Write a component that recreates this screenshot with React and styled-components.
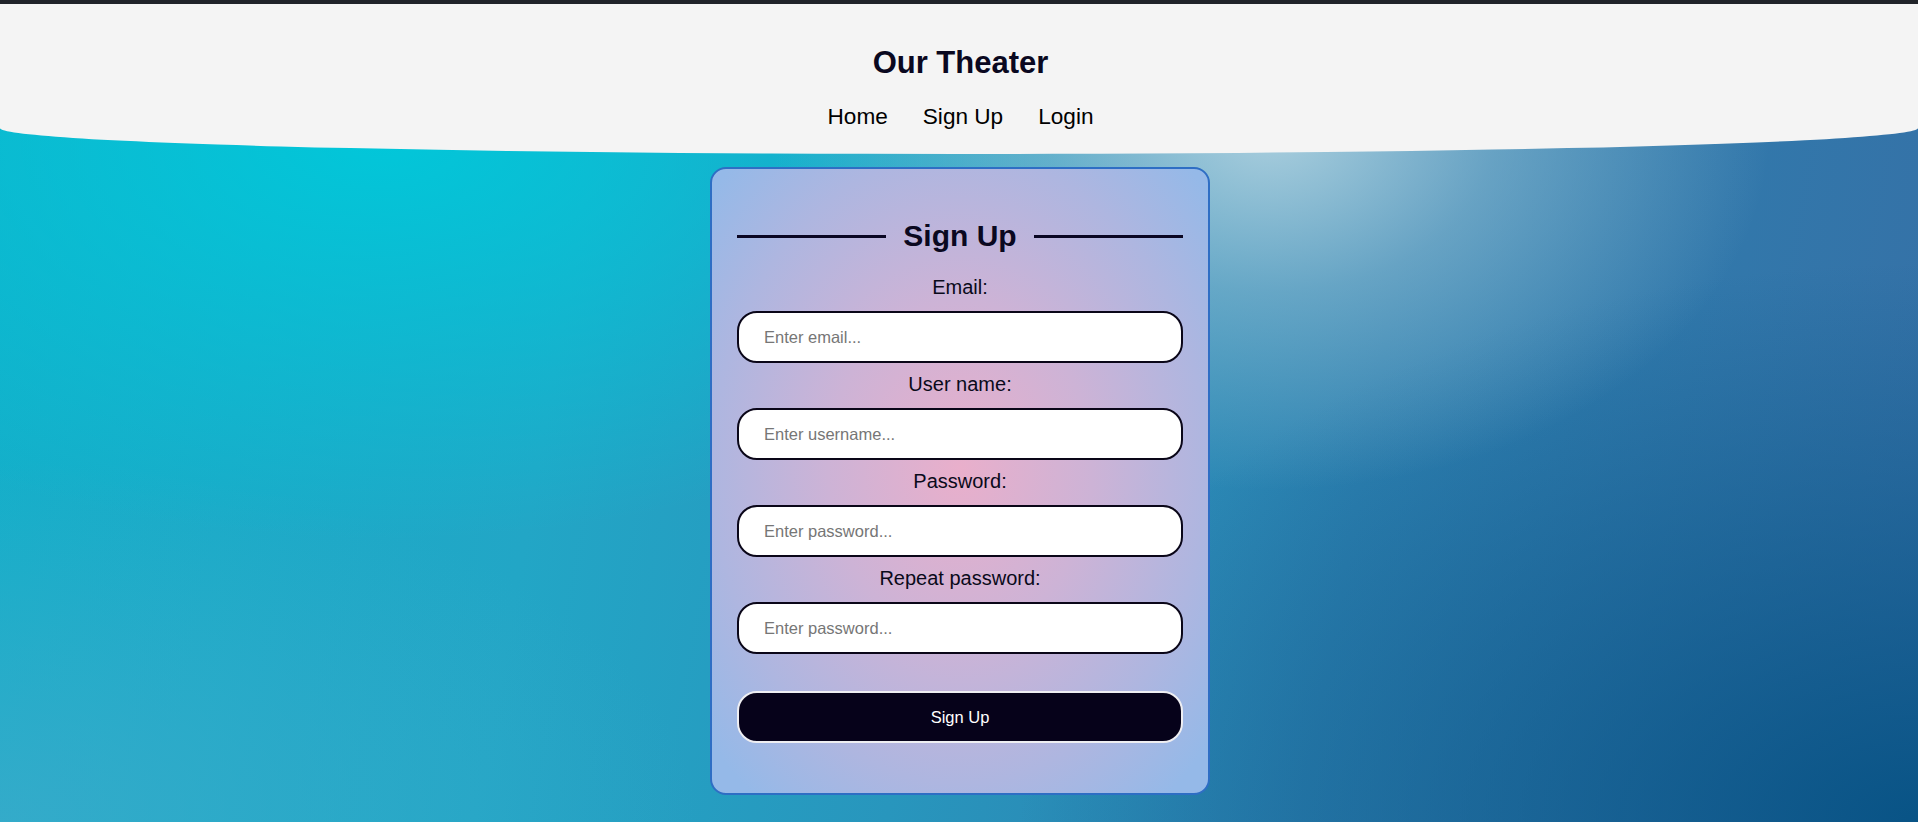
import React from "react";
import styled, { createGlobalStyle } from "styled-components";

const GlobalStyle = createGlobalStyle`
  * {
    box-sizing: border-box;
  }
  html, body {
    margin: 0;
    padding: 0;
  }
  body {
    font-family: "Liberation Sans", Arial, sans-serif;
    color: #0a0820;
  }
`;

const fields = [
  { label: "Email:", type: "email", placeholder: "Enter email..." },
  { label: "User name:", type: "text", placeholder: "Enter username..." },
  { label: "Password:", type: "password", placeholder: "Enter password..." },
  {
    label: "Repeat password:",
    type: "password",
    placeholder: "Enter password...",
  },
];

const App = () => {
  return (
    <Page>
      <GlobalStyle />
      <TopBar />
      <Header>
        <Brand>Our Theater</Brand>
        <Nav>
          <NavLink href="#">Home</NavLink>
          <NavLink href="#">Sign Up</NavLink>
          <NavLink href="#">Login</NavLink>
        </Nav>
      </Header>
      <Main>
        <Card onSubmit={(e) => e.preventDefault()}>
          <Title>
            <Line />
            <span>Sign Up</span>
            <Line />
          </Title>
          {fields.map((field, index) => (
            <Field key={index}>
              <Label htmlFor={`field-${index}`}>{field.label}</Label>
              <Input
                id={`field-${index}`}
                type={field.type}
                placeholder={field.placeholder}
              />
            </Field>
          ))}
          <Submit type="submit">Sign Up</Submit>
        </Card>
      </Main>
    </Page>
  );
};

export default App;

const Page = styled.div`
  min-height: 100vh;
  display: flex;
  flex-direction: column;
  background:
    radial-gradient(
      ellipse 500px 360px at 1270px 130px,
      rgba(184, 214, 226, 0.9) 0%,
      rgba(160, 198, 216, 0.5) 45%,
      rgba(160, 198, 216, 0) 100%
    ),
    radial-gradient(
      ellipse 760px 400px at 380px 140px,
      rgba(0, 200, 218, 0.95),
      rgba(0, 200, 218, 0) 100%
    ),
    radial-gradient(
      ellipse 700px 360px at 0px 822px,
      rgba(62, 170, 202, 0.75),
      rgba(62, 170, 202, 0) 100%
    ),
    radial-gradient(
      ellipse 900px 560px at 1918px 822px,
      rgba(6, 82, 132, 0.95),
      rgba(6, 82, 132, 0) 100%
    ),
    linear-gradient(
      100deg,
      #12b0ca 0%,
      #22a6c6 30%,
      #2896bd 50%,
      #2d80b0 70%,
      #3670a6 100%
    );
`;

const TopBar = styled.div`
  height: 4px;
  background: #202329;
`;

const Header = styled.header`
  background: #f4f4f4;
  padding: 41px 0 24px 3px;
  display: flex;
  flex-direction: column;
  align-items: center;
  border-radius: 0 0 50% 50% / 0 0 26px 26px;
`;

const Brand = styled.h1`
  margin: 0 0 23px;
  font-size: 31px;
  font-weight: 700;
  line-height: normal;
  color: #0a0820;
`;

const Nav = styled.nav`
  display: flex;
  gap: 35px;
`;

const NavLink = styled.a`
  font-size: 22.6px;
  line-height: normal;
  color: #000;
  text-decoration: none;
`;

const Main = styled.main`
  display: flex;
  justify-content: center;
  padding: 13px 0 30px 2px;
`;

const Card = styled.form`
  width: 500px;
  border: 2px solid #2e6ec4;
  border-radius: 16px;
  padding: 50px 25px 50px;
  display: flex;
  flex-direction: column;
  background: radial-gradient(
    ellipse 330px 420px at 50% 48%,
    #e9afcb 0%,
    #cdb3d6 40%,
    #aeb6e0 75%,
    #95b9e8 100%
  );
`;

const Title = styled.h2`
  margin: 0 0 13px;
  display: flex;
  align-items: center;
  gap: 17px;
  font-size: 30px;
  font-weight: 700;
  line-height: normal;
  color: #0a0820;
`;

const Line = styled.span`
  flex: 1;
  height: 3px;
  background: #0a0623;
`;

const Field = styled.div`
  display: flex;
  flex-direction: column;
`;

const Label = styled.label`
  margin: 10px 0 12px;
  text-align: center;
  font-size: 20px;
  line-height: 23px;
  color: #0a0a1a;
`;

const Input = styled.input`
  height: 52px;
  width: 100%;
  padding: 0 25px;
  border: 2px solid #0a0618;
  border-radius: 20px;
  background: #fff;
  font-family: "Liberation Sans", Arial, sans-serif;
  font-size: 16.5px;
  color: #111;
  outline: none;
  &::placeholder {
    color: #767676;
  }
`;

const Submit = styled.button`
  margin-top: 37px;
  height: 52px;
  width: 100%;
  border: 2px solid #eeeef2;
  border-radius: 20px;
  background: #06021a;
  color: #fff;
  font-family: "Liberation Sans", Arial, sans-serif;
  font-size: 16.5px;
  cursor: pointer;
`;
